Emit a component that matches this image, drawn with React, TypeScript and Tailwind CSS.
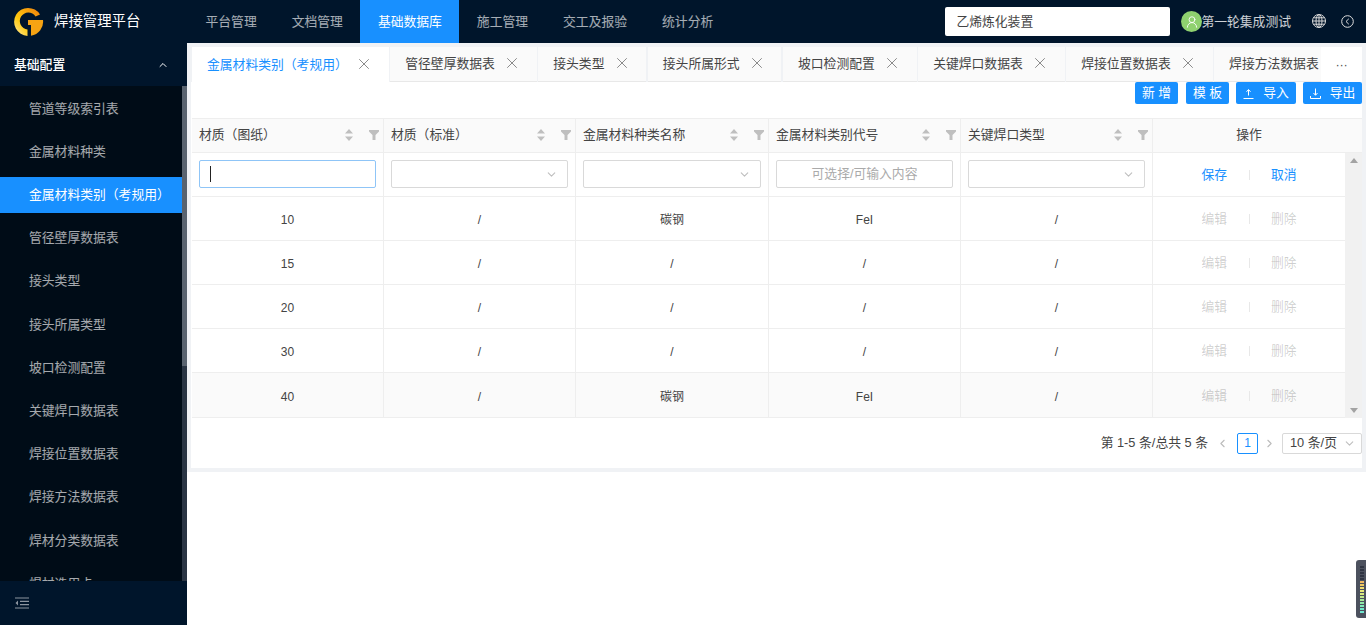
import React from 'react';
import { ChevronUp, ChevronDown, ChevronLeft, ChevronRight, X, UserRound } from 'lucide-react';

const navItems = ['平台管理', '文档管理', '基础数据库', '施工管理', '交工及报验', '统计分析'];
const sideItems = ['管道等级索引表', '金属材料种类', '金属材料类别（考规用）', '管径壁厚数据表', '接头类型', '接头所属类型', '坡口检测配置', '关键焊口数据表', '焊接位置数据表', '焊接方法数据表', '焊材分类数据表', '焊材选用卡'];
const tabs = ['金属材料类别（考规用）', '管径壁厚数据表', '接头类型', '接头所属形式', '坡口检测配置', '关键焊口数据表', '焊接位置数据表', '焊接方法数据表'];
const columns = ['材质（图纸）', '材质（标准）', '金属材料种类名称', '金属材料类别代号', '关键焊口类型'];
const rows = [
    ['10', '/', '碳钢', 'FeI', '/'],
    ['15', '/', '/', '/', '/'],
    ['20', '/', '/', '/', '/'],
    ['30', '/', '/', '/', '/'],
    ['40', '/', '碳钢', 'FeI', '/'],
];
const meter = ['#2f3442', '#2f3442', '#2f3442', '#2f3442', '#2f3442', '#f0b860', '#f0c860', '#f0dc70', '#e8e878', '#d8e880', '#c0e888', '#a8e898', '#90e8a8', '#80e8b8', '#70e8c8', '#70e8d0'];

const gridCols = 'grid grid-cols-[192px_192px_193px_192px_192px_192px]';

const Logo = () => (
    <svg width="30" height="30" viewBox="0 0 30 30">
        <defs>
            <linearGradient id="lg" x1="0.1" y1="0.9" x2="0.9" y2="0.1">
                <stop offset="0" stopColor="#ffe27a" />
                <stop offset="0.35" stopColor="#ffc90f" />
                <stop offset="1" stopColor="#f28a0c" />
            </linearGradient>
        </defs>
        <path d="M26 7.500 A14 14 0 1 0 13.500 28.900 L13.500 22.500 A8.500 8.500 0 1 1 21.500 9.500 Z" fill="url(#lg)" />
        <path d="M14 13 H29 A14 14 0 0 1 17 28.700 V18 H14 Z" fill="#f6a313" />
    </svg>
);

const SortFilter = () => (
    <span className="flex items-center">
        <svg width="8" height="12" viewBox="0 0 8 12" className="mr-[16px]">
            <path d="M4 0 L8 4.500 H0 Z M4 12 L8 7.500 H0 Z" fill="#bfbfbf" />
        </svg>
        <svg width="10" height="10" viewBox="0 0 10 10">
            <path d="M0 0 H10 V1.500 L6.500 5 V10 H3.500 V5 L0 1.500 Z" fill="#bfbfbf" />
        </svg>
    </span>
);

const UploadIcon = () => (
    <svg width="11" height="11" viewBox="0 0 11 11" fill="none" stroke="#fff" strokeWidth="1">
        <path d="M5.500 7.500 V2 M3.500 3.800 L5.500 1.500 L7.500 3.800" />
        <path d="M0.500 10.500 H10.500" />
    </svg>
);

const DownloadIcon = () => (
    <svg width="11" height="11" viewBox="0 0 11 11" fill="none" stroke="#fff" strokeWidth="1">
        <path d="M5.500 0.500 V7 M3.500 5 L5.500 7.300 L7.500 5" />
        <path d="M0.500 8 V10.500 H10.500 V8" />
    </svg>
);

const GlobeIcon = () => (
    <svg width="14" height="14" viewBox="0 0 14 14" fill="none" stroke="#d9d9d9" strokeWidth="1">
        <circle cx="7" cy="7" r="6.500" />
        <ellipse cx="7" cy="7" rx="3" ry="6.500" />
        <path d="M7 0.500 V13.500 M0.500 7 H13.500 M1.500 3.800 H12.500 M1.500 10.200 H12.500" />
    </svg>
);

const BackIcon = () => (
    <svg width="13" height="13" viewBox="0 0 13 13" fill="none" stroke="#e0e0e0" strokeWidth="1">
        <circle cx="6.500" cy="6.500" r="5.800" />
        <path d="M7.800 3.800 L5 6.500 L7.800 9.200" />
    </svg>
);

const Btn = ({ label, icon, wide }: { label: string; icon?: React.ReactNode; wide?: string }) => (
    <button className={`h-[22px] ${wide} bg-[#1890ff] rounded-[2px] text-white text-[12.8px] flex items-center justify-center gap-[9px]`}>
        {icon}
        <span>{label}</span>
    </button>
);

const App: React.FC = () => {
    return (
        <div className="h-[625px] w-[1366px] flex flex-col overflow-hidden bg-white text-[12.8px] text-[#333]" style={{ fontFamily: '"Liberation Sans", "Noto Sans CJK SC", sans-serif' }}>
            <header className="h-[43px] flex-shrink-0 bg-[#00152b] flex items-center">
                <div className="w-[187px] flex items-center pl-[14px]">
                    <Logo />
                    <span className="ml-[10px] text-[14.4px] text-white">焊接管理平台</span>
                </div>
                <nav className="flex h-full ml-px">
                    {navItems.map((n, i) => (
                        <div key={n} className={`h-full px-[17.500px] flex items-center ${i === 2 ? 'bg-[#1890ff] text-white' : 'text-white/65'}`}>{n}</div>
                    ))}
                </nav>
                <div className="ml-auto w-[225px] h-[29px] bg-white rounded-[2px] flex items-center pl-[11px] text-[#444]">乙烯炼化装置</div>
                <div className="ml-[11px] w-[21px] h-[21px] rounded-full bg-[#8fd16f] flex items-center justify-center">
                    <UserRound size={14} color="#fff" strokeWidth={1.5} />
                </div>
                <span className="text-white/80 -ml-px">第一轮集成测试</span>
                <span className="ml-[21px] -mt-[2px]"><GlobeIcon /></span>
                <span className="ml-[15px] mr-[12px]"><BackIcon /></span>
            </header>
            <div className="flex-1 flex min-h-0">
                <aside className="w-[187px] flex-shrink-0 flex flex-col bg-[#000c17] relative">
                    <div className="h-[43px] flex-shrink-0 bg-[#00152b] flex items-center justify-between pl-[14px] pr-[18px] text-white font-medium">
                        <span>基础配置</span>
                        <ChevronUp size={12} color="#fff" />
                    </div>
                    <div className="flex-1 min-h-0 overflow-hidden pt-[4.300px] pr-[5px]">
                        {sideItems.map((s, i) => (
                            <div key={s} className={`h-[36px] mb-[7.200px] pl-[29px] flex items-center whitespace-nowrap ${i === 2 ? 'bg-[#1890ff] text-white' : 'text-white/65'}`}>{s}</div>
                        ))}
                    </div>
                    <div className="h-[44px] flex-shrink-0 bg-[#00152b] flex items-center pl-[15px]">
                        <svg width="14" height="12" viewBox="0 0 14 12" fill="none" stroke="#8c95a0" strokeWidth="1.2">
                            <path d="M0 1 H14 M5 4.300 H14 M5 7.700 H14 M0 11 H14" />
                            <path d="M3 3.500 L0.500 6 L3 8.500 Z" fill="#8c95a0" stroke="none" />
                        </svg>
                    </div>
                    <div className="absolute right-0 top-[43px] w-[5px] h-[280px] bg-[#59636f]" />
                    <div className="absolute right-0 top-[323px] w-[5px] h-[215px] bg-[#2a3544]" />
                </aside>
                <main className="flex-1 min-w-0 flex flex-col">
                    <div className="bg-[#f0f2f5] pl-[5px] pr-[4px] pt-[4px] pb-[4px]">
                        <div className="flex h-[35px] relative overflow-hidden">
                            {tabs.map((t, i) => (
                                <div key={t} className={`h-full flex-shrink-0 mr-[1.500px] pl-[15px] pr-[15.500px] flex items-center whitespace-nowrap ${i === 0 ? 'gap-[7.500px] bg-white text-[#1890ff]' : 'gap-[8.400px] bg-[#fafafa] text-[#444] border-b border-[#e8e8e8]'}`}>
                                    <span>{t}</span>
                                    <X size={18} color="#888" strokeWidth={1.300} className="-mt-[2px]" />
                                </div>
                            ))}
                            <div className="absolute right-0 top-0 bottom-0 w-[41px] bg-white flex items-center justify-center text-[#555] tracking-tight">···</div>
                        </div>
                        <div className="bg-white -ml-px">
                            <div className="h-[36px] flex items-start justify-end gap-[7px]">
                                <Btn label="新 增" wide="w-[43px] mr-px" />
                                <Btn label="模 板" wide="w-[43px]" />
                                <Btn label="导入" wide="w-[60px]" icon={<UploadIcon />} />
                                <Btn label="导出" wide="w-[59px]" icon={<DownloadIcon />} />
                            </div>
                            <div className={`${gridCols} h-[35px] bg-[#fafafa] border-y border-[#eeeeee] pr-[17px] ml-px`}>
                                {columns.map((c) => (
                                    <div key={c} className="flex items-center justify-between pl-[7px] pr-[4px] border-r border-[#eeeeee] text-[#444] pb-px">
                                        <span>{c}</span>
                                        <SortFilter />
                                    </div>
                                ))}
                                <div className="flex items-center justify-center text-[#444] pb-px">操作</div>
                            </div>
                            <div className="flex ml-px">
                                <div className="w-[1153px]">
                                    <div className={`${gridCols} h-[44px] border-b border-[#eeeeee]`}>
                                        <div className="pt-[7px] px-[7px] border-r border-[#eeeeee]">
                                            <div className="w-full h-[28px] border border-[#8fc5f7] rounded-[2px] flex items-center pl-[10px]">
                                                <div className="w-px h-[16px] bg-[#222]" />
                                            </div>
                                        </div>
                                        {[0, 1].map((k) => (
                                            <div key={k} className="pt-[7px] px-[7px] border-r border-[#eeeeee]">
                                                <div className="w-full h-[28px] border border-[#d9d9d9] rounded-[2px] flex items-center justify-end pr-[9px]">
                                                    <ChevronDown size={13} color="#bfbfbf" />
                                                </div>
                                            </div>
                                        ))}
                                        <div className="pt-[7px] px-[7px] border-r border-[#eeeeee]">
                                            <div className="w-full h-[28px] border border-[#d9d9d9] rounded-[2px] flex items-center justify-center text-[#aaa]">可选择/可输入内容</div>
                                        </div>
                                        <div className="pt-[7px] px-[7px] border-r border-[#eeeeee]">
                                            <div className="w-full h-[28px] border border-[#d9d9d9] rounded-[2px] flex items-center justify-end pr-[9px]">
                                                <ChevronDown size={13} color="#bfbfbf" />
                                            </div>
                                        </div>
                                        <div className="flex items-center justify-center text-[#1890ff]">
                                            <span>保存</span>
                                            <span className="w-px h-[10px] bg-[#e8e8e8] mx-[21.500px]" />
                                            <span>取消</span>
                                        </div>
                                    </div>
                                    {rows.map((r, i) => (
                                        <div key={r[0]} className={`${gridCols} border-b border-[#eeeeee] ${i === 4 ? 'h-[45px] bg-[#fafafa]' : 'h-[44px]'}`}>
                                            {r.map((v, j) => (
                                                <div key={j} className="flex items-center justify-center border-r border-[#eeeeee] text-[12px] text-[#444] pt-[3px]">{v}</div>
                                            ))}
                                            <div className="flex items-center justify-center text-black/20 pt-px">
                                                <span>编辑</span>
                                                <span className="w-px h-[10px] bg-[#e8e8e8] mx-[21.500px]" />
                                                <span>删除</span>
                                            </div>
                                        </div>
                                    ))}
                                </div>
                                <div className="w-[17px] bg-[#f1f1f1] flex flex-col items-center justify-between py-[5px]">
                                    <div className="w-0 h-0 border-x-[4px] border-x-transparent border-b-[5px] border-b-[#a3a3a3]" />
                                    <div className="w-0 h-0 border-x-[4px] border-x-transparent border-t-[5px] border-t-[#a3a3a3]" />
                                </div>
                            </div>
                            <div className="h-[50px] flex items-center justify-end text-[#444]">
                                <span>第 1-5 条/总共 5 条</span>
                                <ChevronLeft size={13} color="#bbb" className="ml-[8px]" />
                                <div className="ml-[8px] w-[21px] h-[21px] border border-[#1890ff] rounded-[2px] flex items-center justify-center text-[#1890ff] text-[12px]">1</div>
                                <ChevronRight size={13} color="#bbb" className="ml-[5px]" />
                                <div className="ml-[6px] w-[80px] h-[21px] border border-[#d9d9d9] rounded-[2px] flex items-center justify-between pl-[7px] pr-[5px]">
                                    <span>10 条/页</span>
                                    <ChevronDown size={13} color="#bfbfbf" />
                                </div>
                            </div>
                        </div>
                    </div>
                </main>
            </div>
            <div className="absolute left-[1356px] top-[560px] w-[10px] h-[58px] bg-[#4c515e] rounded-l-[3px] flex flex-col items-end justify-center gap-px pr-[2px]">
                {meter.map((m, i) => (
                    <div key={i} className="w-[4px] h-[2px]" style={{ backgroundColor: m }} />
                ))}
            </div>
        </div>
    );
};

export default App;
